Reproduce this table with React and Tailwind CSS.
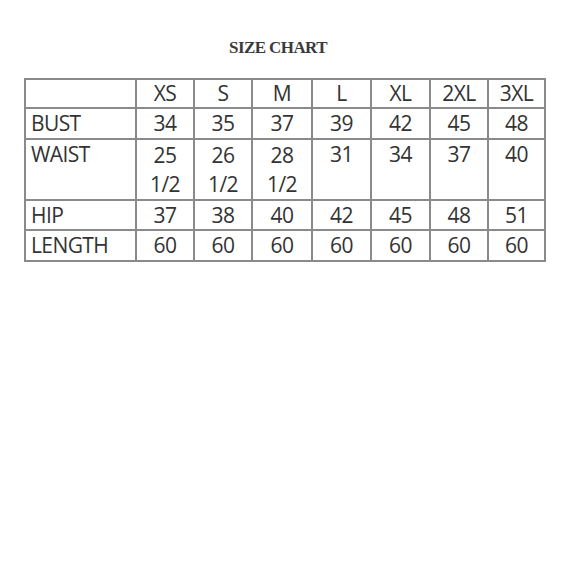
import React from 'react';

const sizes = ['XS', 'S', 'M', 'L', 'XL', '2XL', '3XL'];
const widths = ['w-[111px]', 'w-[58px]', 'w-[58px]', 'w-[60px]', 'w-[59px]', 'w-[59px]', 'w-[58px]', 'w-[57px]'];

const rows = [
  { label: 'BUST', h: 'h-[31px]', values: ['34', '35', '37', '39', '42', '45', '48'] },
  { label: 'WAIST', h: 'h-[61px]', values: ['25 1/2', '26 1/2', '28 1/2', '31', '34', '37', '40'] },
  { label: 'HIP', h: 'h-[30px]', values: ['37', '38', '40', '42', '45', '48', '51'] },
  { label: 'LENGTH', h: 'h-[31px]', values: ['60', '60', '60', '60', '60', '60', '60'] },
];

const cell = 'border-2 border-[#8a8a8a] align-top p-0 leading-[27px]';

export default function App() {
  return (
    <div className="w-[580px] h-[580px] bg-white overflow-hidden">
      {/* Title */}
      <h1 className="pt-[35px] pr-[24px] text-center text-[17px] font-bold tracking-[-0.6px] text-[#3a3a3a] [font-family:'Liberation_Serif',serif]">
        SIZE CHART
      </h1>

      {/* Table */}
      <table className="mt-[17px] ml-[24px] table-fixed border-collapse text-[21px] text-[#333] [font-family:'Open_Sans',sans-serif] tracking-[-0.6px]">
        <colgroup>
          {widths.map((w, i) => (
            <col key={i} className={w} />
          ))}
        </colgroup>
        <thead>
          <tr className="h-[29px]">
            <th className={cell}></th>
            {sizes.map((s) => (
              <th key={s} className={`${cell} font-normal text-center`}>{s}</th>
            ))}
          </tr>
        </thead>
        <tbody>
          {rows.map((r) => (
            <tr key={r.label} className={r.h}>
              <td className={`${cell} text-left pl-[5px] pt-[1px]`}>{r.label}</td>
              {r.values.map((v, i) => (
                <td key={i} className={`${cell} text-center pt-[1px]`}>
                  {v.includes(' ') ? (
                    <>
                      <div className="leading-[29px]">{v.split(' ')[0]}</div>
                      <div className="leading-[29px]">{v.split(' ')[1]}</div>
                    </>
                  ) : (
                    v
                  )}
                </td>
              ))}
            </tr>
          ))}
        </tbody>
      </table>
    </div>
  );
}
